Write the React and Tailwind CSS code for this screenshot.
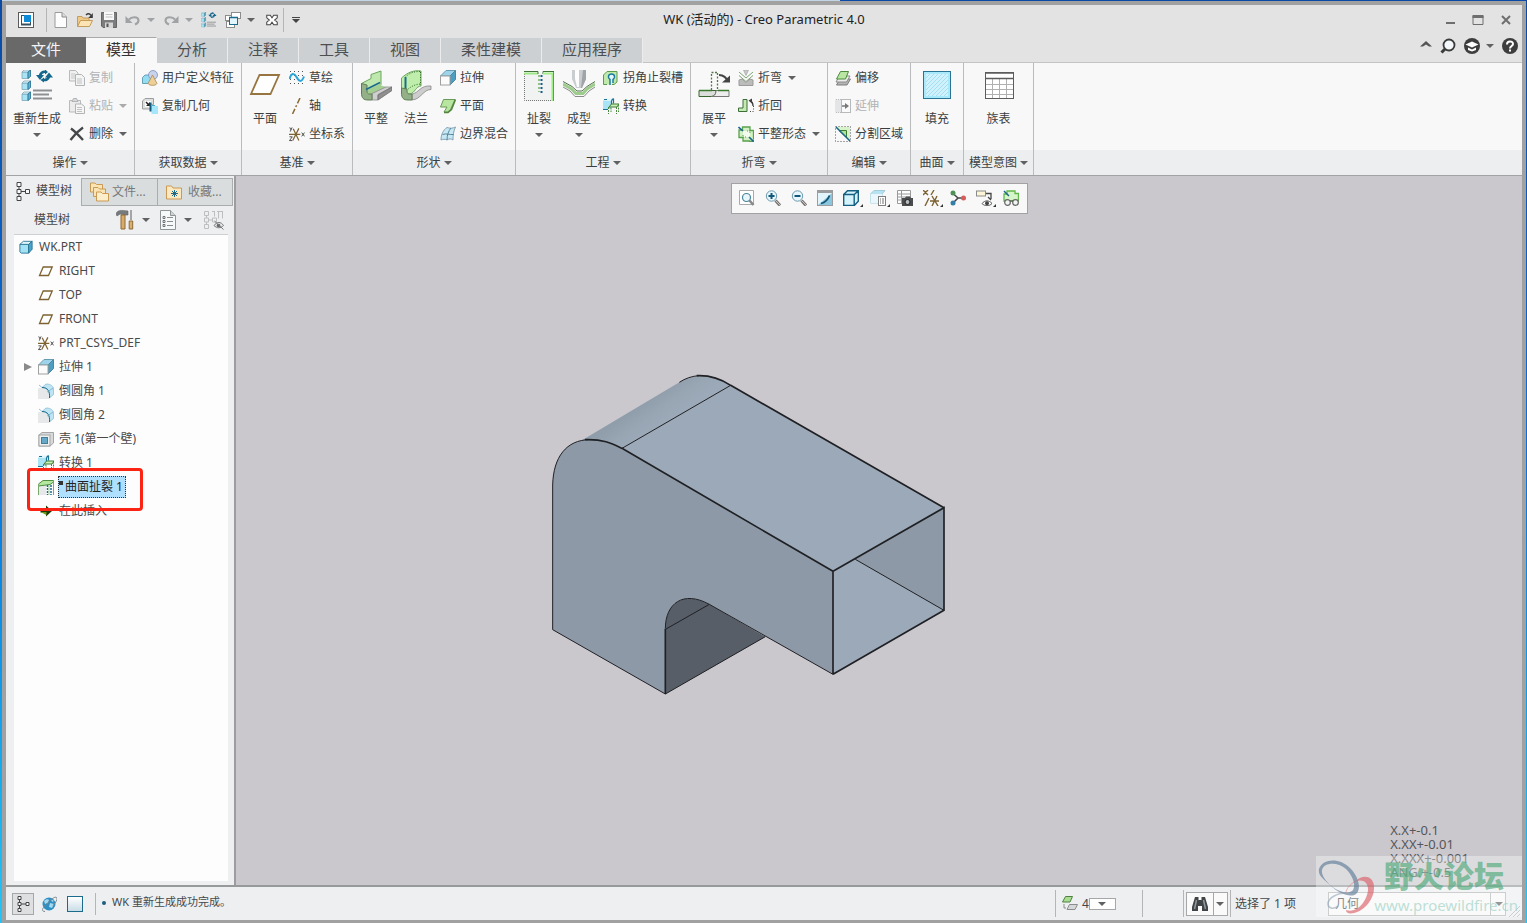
import React, { useState } from "react";

function Icon({ size = "w-4 h-4", box = "0 0 16 16", children }) {
  return (
    <svg className={`${size} shrink-0`} viewBox={box} fill="none" aria-hidden="true">
      {children}
    </svg>
  );
}

function Caret({ className = "text-[#5f6162]" }) {
  return (
    <svg className={`w-2 h-1 shrink-0 ${className}`} viewBox="0 0 8 4" fill="currentColor" aria-hidden="true">
      <path d="M0 0h8L4 4z" />
    </svg>
  );
}

/* ---------- small icons, 16x16 ---------- */

const AppIcon = () => (
  <Icon>
    <rect x=".5" y=".5" width="15" height="15" fill="#fff" stroke="#5b5b5b" />
    <rect x="3.5" y="3.5" width="9" height="9" fill="#fff" stroke="#35505f" />
    <rect x="6" y="3" width="7" height="7" fill="#0e8ad6" />
    <path d="M3 12.5h10" stroke="#35505f" strokeWidth="2" />
  </Icon>
);

const NewIcon = () => (
  <Icon>
    <path d="M2 .5h7l4.5 4.5v10.5H2z" fill="#fdfdfd" stroke="#9a9a9a" />
    <path d="M9 .5V5h4.5" fill="#dcdcdc" stroke="#8a8a8a" />
  </Icon>
);

const OpenIcon = () => (
  <Icon>
    <path d="M.5 14.5V4.5H5l1 1.5h6v3" fill="#f1c987" stroke="#c39b5b" />
    <path d="M.5 14.5 3.5 8.500h12l-3 6z" fill="#fbe3b4" stroke="#c39b5b" />
    <path d="M9 3c2-2 4-1.500 5 .5" stroke="#3c3c3c" strokeWidth="1.5" />
    <path d="M15.800 1v5h-4.500z" fill="#3c3c3c" />
  </Icon>
);

const SaveIcon = () => (
  <Icon>
    <path d="M.5.5h15v15H2l-1.500-1.500z" fill="#7b7d7f" stroke="#636567" />
    <path d="M3 0h10v8H3z" fill="#f8f8f8" />
    <path d="M4.500 2.500h7M4.500 5h7" stroke="#c0c0c0" />
    <path d="M4 10.500h8V16H4z" fill="#d6d6d6" />
    <path d="M5.500 11.500h2V15h-2z" fill="#565656" />
  </Icon>
);

const UndoIcon = () => (
  <Icon>
    <path d="M4 7.500c2.500-3 9-3 9.500.500.200 2-1.300 3.500-3.500 4.500" stroke="#a0a3a5" strokeWidth="2" />
    <path d="M.5 4v7h7z" fill="#a0a3a5" />
  </Icon>
);

const RedoIcon = () => (
  <Icon>
    <path d="M12 7.500C9.500 4.500 3 4.500 2.500 8c-.2 2 1.300 3.500 3.500 4.500" stroke="#a0a3a5" strokeWidth="2" />
    <path d="M15.500 4v7h-7z" fill="#a0a3a5" />
  </Icon>
);

const RegenShape = () => (
  <>
    {[0, 11, 22].map((y) => (
      <g key={y}>
        <path d={`M1 ${y + 2}h6v6.500H1z`} fill="#a9e4f6" stroke="#7fa6b6" strokeWidth=".8" />
        <path d={`M1 ${y + 2}l2-2h6.500l-2.500 2z`} fill="#dff6fd" stroke="#7fa6b6" strokeWidth=".8" />
        <path d={`M7 ${y + 2}l2.500-2v6.500l-2.500 2z`} fill="#5db4d3" stroke="#1f6a8c" strokeWidth=".8" />
      </g>
    ))}
    <path d="M19 5.500c1-3 3.500-4 6-3.500M28 6.500c-1 3-3 4-6 3.500" stroke="#14678c" strokeWidth="2.500" />
    <path d="M15 5h8l-4 5zM24 7.500h8L28 2.500zM24-.5v5l3-2.500zM23 7.500v5l-3.500-2.500z" fill="#14678c" />
    <path d="M12 20.500h19M12 24.500h16M12 28.500h19" stroke="#8d9092" strokeWidth="1.800" />
  </>
);

const WindowsIcon = () => (
  <Icon>
    <rect x=".5" y="3.500" width="8" height="5" fill="#fff" stroke="#8c8c8c" />
    <rect x="6.500" y=".5" width="9" height="6" fill="#fff" stroke="#8c8c8c" />
    <rect x="1.500" y="9.500" width="8" height="6" fill="#fff" stroke="#8c8c8c" />
    <rect x="4.500" y="5.500" width="8" height="7" fill="#e3f5fc" stroke="#1c6a8c" />
    <path d="M4 5.500h9" stroke="#1c6a8c" strokeWidth="1.500" />
  </Icon>
);

const CloseWindowIcon = () => (
  <Icon size="w-3.5 h-3.5">
    <path d="M2 2.500h4l2 3 2-3h4v3L11 8l3 2.500v3h-4l-2-3-2 3H2v-3L5 8 2 5.500z" fill="#fff" stroke="#464646" strokeWidth="1.200" />
  </Icon>
);

const CopyIcon = () => (
  <Icon>
    <path d="M.5.5h6L9 3v8H.5z" fill="#f0f0f0" stroke="#b7b9ba" />
    <path d="M2 4h4M2 6h4M2 8h4" stroke="#c6c8c9" />
    <path d="M6.500 4.500h6L15.500 7.500v8h-9z" fill="#f4f4f4" stroke="#b1b3b4" />
    <path d="M8 9h5M8 11h5M8 13h5" stroke="#bfc1c2" />
  </Icon>
);

const PasteIcon = () => (
  <Icon>
    <path d="M.5 2.500h11V14H.5z" fill="#ececec" stroke="#b7b9ba" />
    <path d="M3 3.500 4.500.5h3L9 3.500z" fill="#d7d9da" stroke="#b1b3b4" />
    <path d="M6.500 6h6L15.500 8.500v7h-9z" fill="#f6f6f6" stroke="#b1b3b4" />
    <path d="M8 9.500h5M8 11.500h5M8 13.500h5" stroke="#bfc1c2" />
  </Icon>
);

const DeleteIcon = () => (
  <Icon>
    <path d="M2 2.500c4 3 7 6 12 11.500M14 1.500C9 5 5 9 1.500 14" stroke="#454748" strokeWidth="2.300" />
  </Icon>
);

const UdfIcon = () => (
  <Icon>
    <path d="M.5 7.500l2.500-2.500h6v6L7 13.500H.5z" fill="#94dcf2" stroke="#4e8ea8" strokeWidth=".8" />
    <circle cx="11" cy="5" r="4.500" fill="#c8d2ec" stroke="#7e8fbb" strokeWidth=".8" />
    <path d="M10.500 5 15 13.500c-1.500 2.500-7.500 2.500-9 0z" fill="#edcf97" stroke="#a88955" strokeWidth=".8" />
  </Icon>
);

const CopyGeomIcon = () => (
  <Icon>
    <path d="M.5 3 3 .5h8.500v6L9 7v4H.5z" fill="#dedfdf" stroke="#9b9d9e" />
    <rect x="3" y="3" width="6" height="6" fill="#fff" />
    <path d="M4 4l3 3" stroke="#222" strokeWidth="1.500" />
    <path d="M8 4v4H4z" fill="#222" />
    <path d="M9.500 8H16v8H9.500z" fill="#a5e6fa" />
    <path d="M8.500 4.500v9" stroke="#14587c" strokeWidth="2" />
    <path d="M9 7.500h4" stroke="#4fb0d2" />
  </Icon>
);

const PlaneIcon = () => (
  <Icon>
    <path d="M5.200 4h9L10.500 12.500H1.500z" fill="#fff" stroke="#7d6232" strokeWidth="1.300" />
  </Icon>
);

const SketchIcon = () => (
  <Icon>
    <path d="M1 1.500h14M1 5.500h14M1 9.500h14M1 13.500h14" stroke="#555" strokeDasharray="1 3" />
    <path d="M.5 9C2 3 5 2.500 7.500 7s5 6 7.500-.5" stroke="#29a5d8" strokeWidth="2" />
  </Icon>
);

const AxisIcon = () => (
  <Icon>
    <path d="M11 0 3.500 16" stroke="#8a6a35" strokeWidth="1.500" strokeDasharray="6 2 2 2" />
  </Icon>
);

const CsysIcon = () => (
  <Icon box="0 0 17 16">
    <path d="M0 8.500h12M4.500 2.500l6 12.500M10.500 2 4 15" stroke="#7d6232" strokeWidth="1.300" />
    <path d="M.8 1l1.200 2.500M3.300 1 1.300 5.500M.5 11h3l-3 4h3M13.500 6.500l3 4M16.500 6.500l-3 4" stroke="#333" strokeWidth=".9" />
  </Icon>
);

const ExtrudeIcon = () => (
  <Icon>
    <path d="M.5 6 6 .5h9.500L10 6z" fill="#9fd3e9" stroke="#669db5" />
    <path d="M10 6l5.500-5.500v9L10 15z" fill="#4e9ec2" stroke="#4e87a0" />
    <rect x=".5" y="6" width="9.500" height="9" fill="#fbfbfb" stroke="#a0a0a0" />
  </Icon>
);

const FlatWallIcon = () => (
  <Icon>
    <path d="M3.500 1.500h11.500l-4.500 10-3 2.500H4l3-5H.5z" fill="#b8e6a0" stroke="#6a9a58" />
    <path d="M15.500 1.500l-4 10-3.500 3H4" stroke="#54823f" strokeWidth="1.500" />
  </Icon>
);

const BoundaryIcon = () => (
  <Icon>
    <path d="M1 14C1 9 3 4 7 1.500c3 1 5.500 1 8.500-.5C13.500 5 13 9 13 14c-2-1.500-4-1.500-6 0-2-1-4-1-6 0z" fill="#c6e9f5" stroke="#7b9bab" strokeWidth=".9" />
    <path d="M2.500 8.500c4-1.500 7 .5 11 0M7 14c0-5 1.500-9 4-12" stroke="#4c7a8f" strokeWidth=".9" />
  </Icon>
);

const ReliefIcon = () => (
  <Icon>
    <path d="M4 14.500H.5V5L4 1.500h10V12l-3 2.500H9" fill="#bfeaab" stroke="#5c9a4c" />
    <path d="M7 15V9.500C4.500 8 5 4 8.500 4s4 4 1.500 5.500V13" fill="#e6f7fc" stroke="#1b7ba0" strokeWidth="1.500" />
  </Icon>
);

const ConvertIcon = () => (
  <Icon>
    <path d="M0 2.500h8V11H0z" fill="#a9e3f6" />
    <path d="M0 2 3 .5h7.500L8 3z" fill="#dff5fc" />
    <path d="M1 1.500h3M8.500 2.500v5M10.500.5v5M8.500 2.500l2-2M0 11.500h5" stroke="#1b7396" strokeWidth="1.200" />
    <path d="M6 9l2.500-3H16l-2 3z" fill="#c9f0b6" stroke="#3f7a33" />
    <path d="M5.500 9v7M8 9.500V14M13.500 9v7M15.500 6.500V14" stroke="#4c8940" strokeDasharray="2 1" />
  </Icon>
);

const BendIcon = () => (
  <Icon>
    <path d="M5.500 0h5L8 5.500z" fill="#c6c9cb" stroke="#9a9a9a" strokeWidth=".6" />
    <path d="M1 2l7 6 7-6M1 5.500l7 6 7-6" stroke="#7fa575" />
    <path d="M1 10l3-1 4 3.500L12 9l3 1v5.500H1z" fill="#bcbcbc" stroke="#9b9b9b" />
  </Icon>
);

const BendBackIcon = () => (
  <Icon>
    <path d="M.5 10h4.500V1.500h4v12H.5z" fill="#c6eab6" stroke="#3c6e37" />
    <path d="M15.500 13.500H11M15.500 8v5" stroke="#4a4a4a" strokeDasharray="1 1.500" />
    <path d="M15 8c0-3-1-4.500-3-5" stroke="#3c3c3c" strokeWidth="1.300" />
    <path d="M10.500 2.500 14 .5v5z" fill="#3c3c3c" />
  </Icon>
);

const FlatPatternIcon = () => (
  <Icon>
    <path d="M4.500 1H12v3.500h3.500V12H16v3.500h-4.500V15H5v-3.500H1V4h3.500z" fill="#d2f0c4" stroke="#5aa04d" strokeWidth="1.300" />
    <rect x="5" y="5" width="7" height="6" fill="#f3fbef" />
    <path d="M.5 1l4.500 4M11 11l4.500 4.500" stroke="#1b678a" strokeWidth="1.600" />
    <path d="M5 9v2h3M9 5h3v3" stroke="#5aa04d" strokeDasharray="1 1" />
  </Icon>
);

const OffsetIcon = () => (
  <Icon>
    <path d="M1.500 15 5 9h10.500l-3.500 6z" fill="#b4b4b4" stroke="#7d7d7d" />
    <path d="M1 12 4.500 6h10.500L11.500 12z" fill="#ececec" stroke="#8b8b8b" />
    <path d="M1.500 9 5.500 1.500h8L10.500 9z" fill="#b9e7a3" stroke="#4d8a3e" />
  </Icon>
);

const ExtendIcon = () => (
  <Icon>
    <path d="M0 1.500h6v13H0z" fill="#e4e5e6" />
    <rect x="6.500" y="1.500" width="9" height="13" fill="#fafafa" stroke="#b7b9ba" />
    <path d="M1 1.500h5M1 14.500h5" stroke="#bbb" strokeDasharray="1 1" />
    <path d="M7 8h4" stroke="#777" strokeWidth="1.500" />
    <path d="M10 5l4 3-4 3z" fill="#777" />
  </Icon>
);

const SplitIcon = () => (
  <Icon>
    <path d="M1 1h14v14z" fill="#d6f3ca" />
    <rect x=".5" y=".5" width="15" height="15" stroke="#555" strokeDasharray="1 2" />
    <path d="M4 4.500h7.500v7z" fill="#aee398" stroke="#3b7d31" />
    <path d="M1 1l14 14" stroke="#1b678a" strokeWidth="1.500" />
  </Icon>
);

/* ---------- large ribbon icons, 32x32 ---------- */

const Big = ({ children }) => <Icon size="w-8 h-8" box="0 0 32 32">{children}</Icon>;

const BigPlane = () => (
  <Big>
    <path d="M10.500 5h19.500l-8.500 19H2z" fill="#fefefe" stroke="#977540" strokeWidth="1.800" />
  </Big>
);

const BigFlat = () => (
  <Big>
    <path d="M1.500 13.500 11 8.500V4.500L21 1v14L8 21.500z" fill="#bfe8ae" stroke="#6aa65b" />
    <path d="M7 20 21 13.500v2l6 1.500-14 7H10c-2 0-3-1-3-4z" fill="#a3cf92" />
    <path d="M12 23.500 26 17h6l-14 7.500v5.500h-6z" fill="#cfcfcf" stroke="#8c8c8c" strokeWidth=".8" />
    <path d="M18 25 32 17v3.500L18 30z" fill="#8f8f8f" stroke="#6e6e6e" strokeWidth=".8" />
    <path d="M1.500 13.500V23c0 5 2 7 6.500 7h4v-6h-2.500C8 24 7 23 7 21v-6z" fill="#94b088" stroke="#5e7f55" />
    <path d="M6 19.500 20 12.500" stroke="#1c6a8c" strokeWidth="1.600" />
  </Big>
);

const BigFlange = () => (
  <Big>
    <path d="M12 24c7-1 8-9 19-8v3.500c-8 0-10 10-19 10.500z" fill="#cdcdcd" stroke="#868686" strokeWidth=".8" />
    <path d="M1.500 8C8 2 14 0 21 1v15c-5 0-6 7-11 8-4 0-8-1-8.500-5z" fill="#bfeeac" stroke="#6aa65b" />
    <path d="M5.500 7C10 2.500 14 1.500 21 1.500M6 21c4-4 9-7 15-7" stroke="#2f6a2b" strokeDasharray="1 1.500" />
    <path d="M20.500 2v13" stroke="#2f6a2b" strokeDasharray="1 1.500" />
    <path d="M5.500 7v12" stroke="#1c6a8c" strokeWidth="2" />
    <path d="M1.500 18V23c0 5 2 7 6.500 7h4v-6h-2.500C8 24 7 23 7 21v-2z" fill="#94b088" stroke="#5e7f55" />
  </Big>
);

const BigRip = () => (
  <Big>
    <path d="M1 3h30v28H1z" fill="#f1f2f2" />
    <path d="M1.500 4v26.500H30" stroke="#777" strokeDasharray="1 1" />
    <path d="M1 3.500h14" stroke="#9be884" strokeWidth="2" />
    <path d="M1 1.500h14V4M31 1.500H20V4" stroke="#3f7238" />
    <path d="M20 3.500h9.500V31" stroke="#a0ee88" strokeWidth="2" />
    <path d="M30.500 2v29" stroke="#5ba04c" />
    <path d="M16 5v17" stroke="#8fc283" strokeWidth="2" strokeDasharray="2 2" />
    <path d="M18.500 5v18" stroke="#175c81" strokeWidth="2" strokeDasharray="2 2" />
  </Big>
);

const BigForm = () => (
  <Big>
    <path d="M9 0h14v9l-4 9h-6L9 9z" fill="#c9cdd0" />
    <path d="M12 0h4v17h-2l-2-8z" fill="#fdfdfd" />
    <path d="M20 0h3v9l-4 9h-1z" fill="#9fa4a8" />
    <path d="M0 11.500l9 5 5 4.500h5l5-4.500 8-5" stroke="#55704d" />
    <path d="M0 14l8.500 5L13 23.500h7L24 19l8-5" stroke="#9dcc8d" strokeWidth="3" />
    <path d="M0 17l7 4 5 5.500h9l5-5.500 6-4" stroke="#8a8a8a" />
  </Big>
);

const BigUnbend = () => (
  <Big>
    <path d="M1 20.500h17c0 4-2 6-5 6H1z" fill="#dcdedb" stroke="#3a6533" />
    <path d="M18 20.500h13v6H13c3 0 5-2 5-6z" fill="#ededed" stroke="#777" />
    <path d="M1 20.500h13M20 20.500h11" stroke="#3a7a2e" strokeWidth="1.500" />
    <path d="M13.500 20V2.500h6M19.500 3v17" stroke="#537649" strokeWidth="1.300" strokeDasharray="2 1.500" />
    <path d="M21 5c5 0 7 3 9 6" stroke="#444" strokeWidth="2" />
    <path d="M24 12.500h8V5.500z" fill="#444" />
  </Big>
);

const BigFill = () => (
  <Big>
    <rect x="2.500" y="1.500" width="27" height="27" fill="#a8e9fb" stroke="#2b7392" />
    <rect x="5" y="4" width="22" height="22" fill="#d0f2fc" />
    <path d="M5 8l4-4M5 12l8-8M5 16 17 4M5 20 21 4M5 24 25 4M7 26 27 6M11 26l16-16M15 26l12-12M19 26l8-8M23 26l4-4" stroke="#a4def0" />
  </Big>
);

const BigTable = () => (
  <Big>
    <rect x="2.500" y="2.500" width="28" height="26" fill="#fff" stroke="#5c5c5c" />
    <path d="M3 14.500h27M3 19.500h27M3 24.500h27M9.500 8v20M16.500 8v20M23.500 8v20" stroke="#b0b0b0" />
    <path d="M2 3h29M3 8.500h27" stroke="#5c5c5c" strokeWidth="1.500" />
  </Big>
);

const BigRegen = () => <Big><RegenShape /></Big>;
const SmallRegen = () => <Icon box="0 0 33 32"><RegenShape /></Icon>;

/* ---------- model tree icons ---------- */

const PartIcon = () => (
  <Icon size="w-3.5 h-3.5">
    <path d="M1 5h10v10H2.500L1 13.500z" fill="#a3e2f5" stroke="#267191" />
    <path d="M1 5l4-3.500h10L11 5z" fill="#dff6fd" stroke="#267191" />
    <path d="M11 5l4-3.500v9L11 15z" fill="#4aa7cb" stroke="#267191" />
  </Icon>
);

const RoundIcon = () => (
  <Icon>
    <path d="M0 5h5c5 1 6 4 6 11H0z" fill="#e7e8e9" />
    <path d="M4 4.500 8 1c5 0 7.500 2 7.500 6v4.500L11.500 15c.5-6-1.500-10-7.500-10.500z" fill="#bfe4f3" stroke="#8fc0d4" strokeWidth=".8" />
    <path d="M4 4.500c6 0 8 4 7.500 10.500" stroke="#1c6a8c" />
    <path d="M1 2l3 2.500M9 9l6.500-4" stroke="#6fb3cd" strokeWidth=".8" />
  </Icon>
);

const ShellIcon = () => (
  <Icon>
    <path d="M1 4l3-2.500h11.500V12L12 15H1z" fill="#d7d9da" stroke="#a3a5a6" />
    <rect x="1" y="4" width="11" height="11" fill="#eeefef" stroke="#a3a5a6" />
    <rect x="3.500" y="6.500" width="6" height="6" fill="#65a9c8" stroke="#467e98" />
  </Icon>
);

const RipTreeIcon = () => (
  <Icon>
    <path d="M1 6h7v10H1z" fill="#e7e8e9" />
    <path d="M.5 7V5L5 1.500h10.500V3L12 5.500z" fill="#b3e89e" stroke="#4e8d42" />
    <path d="M.5 5v11M15.500 2v14" stroke="#7aa970" />
    <path d="M9.500 6v10M13 6v10" stroke="#1c6a8c" strokeWidth="1.500" strokeDasharray="2 1" />
    <path d="M11 6v10" stroke="#9ccf8c" />
  </Icon>
);

const InsertIcon = () => (
  <Icon>
    <path d="M2.500 6.500H8V2.500l6 5.500-6 5.500V9.500H2.500z" fill="#1d3a0c" />
    <path d="M2.500 9h6v3z" fill="#6a9c1e" />
  </Icon>
);

const TreeIcon = () => (
  <Icon size="w-3.5 h-[19px]" box="0 0 14 19">
    <path d="M3 5v9M5 9.500h4.500" stroke="#444" />
    <path d="M1 .5h4v4H1zM1 7.500h4v4H1zM1 14.500h4v4H1zM9.500 7.500h4v4h-4z" fill="#fafafa" stroke="#444" />
  </Icon>
);

const FoldersIcon = () => (
  <Icon size="w-5 h-5" box="0 0 20 20">
    <path d="M.5 1h4.500l1.500 1.500h6V10H.5z" fill="#fbe4b3" stroke="#c99a55" />
    <path d="M3.500 5.500H8L9.500 7h6v7.500h-12z" fill="#fbe4b3" stroke="#c99a55" />
    <path d="M6.500 10H11l1.500 1.500h6V19h-12z" fill="#fdeecb" stroke="#c99a55" />
  </Icon>
);

const FavoritesIcon = () => (
  <Icon>
    <path d="M.5 2h5l1.500 2h8.500v11H.5z" fill="#fbe8bf" stroke="#c99a55" />
    <path d="M8.500 6v7M5 9.500h7M6 7l5 5M11 7l-5 5" stroke="#1c6a8c" />
  </Icon>
);

const ToolsIcon = () => (
  <Icon size="w-[18px] h-[22px]" box="0 0 18 22">
    <path d="M0 5C1 1 5 1 12 2v4H8L4 5 1 7z" fill="#777b7e" stroke="#5e6163" strokeWidth=".6" />
    <path d="M5 6h4v14H5z" fill="#d8ab6a" stroke="#8e6a35" />
    <path d="M15 1v10" stroke="#8a8d8f" strokeWidth="1.500" />
    <path d="M13.200 12h3.500v8h-3.500z" fill="#d9b071" stroke="#8e6a35" />
  </Icon>
);

const SettingsIcon = () => (
  <Icon size="w-4 h-5" box="0 0 16 20">
    <path d="M.5.5h10l5 5v14H.5z" fill="#f6f9fa" stroke="#8f9496" />
    <path d="M10.500.5v5h5" fill="#d1d4d6" stroke="#8f9496" />
    <path d="M7 7.500h6M7 11.500h6M7 15.500h6" stroke="#8b8b8b" />
    <path d="M3 6.500h2v2H3zM3 10.500h2v2H3zM3 14.500h2v2H3z" stroke="#555" strokeWidth=".8" />
  </Icon>
);

const HiddenTreeIcon = () => (
  <Icon size="w-5 h-5" box="0 0 20 20">
    <path d="M.5 1.500h4v4h-4zM.5 8h4v4h-4zM.5 14.500h4v4h-4zM2.500 5.500V8M2.500 12v2.500M4.500 10H8M8.500 8h4v4h-4zM8 1.500h3M13 1.500h6M10.500 1.500v5M14.500 1.500v7M18.500 1.500v7" stroke="#bcbec0" />
    <path d="M10 15.500c3-4 7-4 9.500 0-3 3-6.500 3-9.500 0z" fill="#e5e6e7" stroke="#777" />
    <circle cx="14.500" cy="15.500" r="1.800" fill="#666" />
    <path d="M10.500 11l9 8.500" stroke="#777" />
  </Icon>
);

/* ---------- graphics toolbar icons ---------- */

const Lens = ({ sign }) => (
  <>
    <path d="M10.500 10.500 15 15.500" stroke="#777" strokeWidth="3" />
    <path d="M10.500 10.500 15 15" stroke="#d2c4bd" />
    <circle cx="6.500" cy="6" r="5.200" fill="#e6f6fc" stroke="#6f9bad" />
    <path d={sign} stroke="#14577a" strokeWidth="2" />
  </>
);

const ViewIcons = {
  "重新调整": (
    <Icon>
      <path d="M.5.5h14v14H.5z" fill="#fff" stroke="#a7a9aa" />
      <path d="M10.500 10.500l4 4.500" stroke="#888" strokeWidth="2.500" />
      <circle cx="7.500" cy="7.500" r="4" fill="#e6f6fc" stroke="#4a839b" strokeWidth="1.200" />
    </Icon>
  ),
  "放大": <Icon><Lens sign="M3.500 6h6M6.500 3v6" /></Icon>,
  "缩小": <Icon><Lens sign="M3.500 6h6" /></Icon>,
  "重画": (
    <Icon>
      <rect x=".5" y=".5" width="15" height="15" fill="#e3f5fc" stroke="#9a9c9d" />
      <path d="M1 15 15 3v12z" fill="#8ac7de" />
      <path d="M0 1.500h16" stroke="#9a9c9d" strokeWidth="3" />
      <path d="M4 13.500c4-1 7-4 8.500-8" stroke="#145272" strokeWidth="1.800" />
    </Icon>
  ),
  "显示样式": (
    <Icon>
      <path d="M.7 4.500h10.500v11H.7zM.7 4.500 4.500.7h10.800v10.500l-4 4.300M11.300 4.500l4-3.800" fill="#d5f3fc" stroke="#145f82" strokeWidth="1.400" />
    </Icon>
  ),
  "已保存方向": (
    <Icon>
      <path d="M.5 4 4 .5h11L12 4v9H.5z" fill="#b6e2f2" stroke="#a0cbdc" />
      <path d="M.5 4H12v9H.5z" fill="#e9f6fb" />
      <rect x="8.500" y="6.500" width="7" height="9" fill="#fff" stroke="#7d7d7d" />
      <path d="M10 9h1M10 11h1M10 13h1M12 9h2M12 11h2M12 13h2" stroke="#444" strokeWidth=".8" />
    </Icon>
  ),
  "视图管理器": (
    <Icon>
      <path d="M.5.5h13v13H.5zM.5 4h13M.5 7h13M.5 10h13M4.500.5v13" fill="#fff" stroke="#999" />
      <path d="M5 8h3l1-1.500h4l1 1.500h2v8H5z" fill="#4a4c4e" />
      <circle cx="10.500" cy="12" r="2.500" fill="#b8bbbd" stroke="#222" />
    </Icon>
  ),
  "基准显示过滤器": (
    <Icon>
      <path d="M0 0l5 5M5 0 0 5M11 0 8 5M6 8l-4 8M7 11h9M9 16l5-10M9 6l6 10" stroke="#7d6232" strokeWidth="1.400" />
    </Icon>
  ),
  "旋转中心": (
    <Icon>
      <path d="M3 3.500 8 8l-5 5M8 8h5" stroke="#444" strokeWidth="1.500" />
      <circle cx="3" cy="3" r="2.500" fill="#4f9157" />
      <circle cx="3" cy="13" r="2.500" fill="#327ea4" />
      <circle cx="13.500" cy="8" r="2.500" fill="#d55d5d" />
    </Icon>
  ),
  "注释显示": (
    <Icon>
      <rect x=".5" y="1" width="9" height="5" fill="#fdf5d5" stroke="#8a8a8a" />
      <path d="M10 3.500h5V9M12 7l3 3" stroke="#444" strokeWidth="1.300" />
      <path d="M6 13.500c3-3.500 7-3.500 10 0-3 3-7 3-10 0z" fill="#fff" stroke="#555" />
      <circle cx="11" cy="13.300" r="2" fill="#444" />
    </Icon>
  ),
  "平整预览": (
    <Icon>
      <path d="M4 1h8v2.500h3.500V11H1V4h3z" fill="#d6f5c9" stroke="#5fb84b" strokeWidth="1.300" />
      <path d="M1 1l5 5" stroke="#1b678a" strokeWidth="1.500" />
      <circle cx="4.500" cy="12.500" r="2.800" fill="#f4f4f4" stroke="#666" strokeWidth="1.200" />
      <circle cx="12.500" cy="12.500" r="2.800" fill="#f4f4f4" stroke="#666" strokeWidth="1.200" />
      <path d="M7 11h3" stroke="#555" />
    </Icon>
  ),
};

const viewTools = [
  { name: "重新调整" },
  { name: "放大" },
  { name: "缩小" },
  { name: "重画" },
  { name: "显示样式", menu: true },
  { name: "已保存方向", menu: true },
  { name: "视图管理器" },
  { name: "基准显示过滤器", menu: true },
  { name: "旋转中心" },
  { name: "注释显示", menu: true },
  { name: "平整预览" },
];

const tabs = ["模型", "分析", "注释", "工具", "视图", "柔性建模", "应用程序"];

const groups = [
  {
    name: "操作",
    big: [{ label: "重新生成", icon: BigRegen, menu: true, wide: true }],
    small: [
      { label: "复制", icon: CopyIcon, disabled: true },
      { label: "粘贴", icon: PasteIcon, disabled: true, menu: true },
      { label: "删除", icon: DeleteIcon, menu: true },
    ],
  },
  {
    name: "获取数据",
    small: [
      { label: "用户定义特征", icon: UdfIcon },
      { label: "复制几何", icon: CopyGeomIcon },
    ],
  },
  {
    name: "基准",
    big: [{ label: "平面", icon: BigPlane }],
    small: [
      { label: "草绘", icon: SketchIcon },
      { label: "轴", icon: AxisIcon },
      { label: "坐标系", icon: CsysIcon },
    ],
  },
  {
    name: "形状",
    big: [
      { label: "平整", icon: BigFlat },
      { label: "法兰", icon: BigFlange },
    ],
    small: [
      { label: "拉伸", icon: ExtrudeIcon },
      { label: "平面", icon: FlatWallIcon },
      { label: "边界混合", icon: BoundaryIcon },
    ],
  },
  {
    name: "工程",
    big: [
      { label: "扯裂", icon: BigRip, menu: true },
      { label: "成型", icon: BigForm, menu: true },
    ],
    small: [
      { label: "拐角止裂槽", icon: ReliefIcon },
      { label: "转换", icon: ConvertIcon },
    ],
  },
  {
    name: "折弯",
    big: [{ label: "展平", icon: BigUnbend, menu: true }],
    small: [
      { label: "折弯", icon: BendIcon, menu: true },
      { label: "折回", icon: BendBackIcon },
      { label: "平整形态", icon: FlatPatternIcon, menu: true },
    ],
  },
  {
    name: "编辑",
    small: [
      { label: "偏移", icon: OffsetIcon },
      { label: "延伸", icon: ExtendIcon, disabled: true },
      { label: "分割区域", icon: SplitIcon },
    ],
  },
  { name: "曲面", big: [{ label: "填充", icon: BigFill }] },
  { name: "模型意图", big: [{ label: "族表", icon: BigTable }] },
];

const features = [
  { label: "RIGHT", icon: PlaneIcon },
  { label: "TOP", icon: PlaneIcon },
  { label: "FRONT", icon: PlaneIcon },
  { label: "PRT_CSYS_DEF", icon: CsysIcon },
  { label: "拉伸 1", icon: ExtrudeIcon, expandable: true },
  { label: "倒圆角 1", icon: RoundIcon },
  { label: "倒圆角 2", icon: RoundIcon },
  { label: "壳 1(第一个壁)", icon: ShellIcon },
  { label: "转换 1", icon: ConvertIcon },
  { label: "曲面扯裂 1", icon: RipTreeIcon, selected: true },
  { label: "在此插入", icon: InsertIcon },
];

function TitleBar() {
  return (
    <header className="grid grid-cols-[1fr_auto_1fr] items-center h-8 pb-[3px] shrink-0">
      <div className="flex items-center pl-3">
        <button aria-label="Creo"><AppIcon /></button>
        <span className="w-px h-6 bg-[#b5b5b5] ml-3 mr-1.5" />
        <div className="flex items-center gap-2">
          <button aria-label="新建"><NewIcon /></button>
          <button aria-label="打开"><OpenIcon /></button>
          <button aria-label="保存"><SaveIcon /></button>
          <button aria-label="撤消" className="flex items-center gap-1.5">
            <UndoIcon />
            <Caret className="text-[#a0a3a5]" />
          </button>
          <button aria-label="重做" className="flex items-center gap-1.5">
            <RedoIcon />
            <Caret className="text-[#a0a3a5]" />
          </button>
          <button aria-label="重新生成"><SmallRegen /></button>
          <button aria-label="窗口" className="flex items-center gap-1.5">
            <WindowsIcon />
            <Caret />
          </button>
          <button aria-label="关闭" className="ml-0.5"><CloseWindowIcon /></button>
        </div>
        <span className="w-px h-6 bg-[#b5b5b5] ml-1 mr-2" />
        <button aria-label="自定义快速访问工具栏" className="flex flex-col items-center gap-px text-[#444]">
          <span className="w-2 h-px bg-current" />
          <Caret className="text-[#444]" />
        </button>
      </div>
      <h1 className="text-[13px] text-[#222]">WK (活动的) - Creo Parametric 4.0</h1>
      <div className="flex items-center justify-end gap-4 pr-2.5 text-[#6e6e6e]">
        <button aria-label="最小化">
          <Icon size="w-3 h-3" box="0 0 12 12"><path d="M2 9h9" stroke="currentColor" strokeWidth="2" /></Icon>
        </button>
        <button aria-label="最大化">
          <Icon size="w-3 h-3" box="0 0 12 12"><path d="M1 2h10v8.500H1z" stroke="currentColor" /><path d="M.5 1h11v3H.5z" fill="currentColor" /></Icon>
        </button>
        <button aria-label="关闭窗口">
          <Icon size="w-3 h-3" box="0 0 12 12"><path d="M2 2l8 8M10 2l-8 8" stroke="currentColor" strokeWidth="2" /></Icon>
        </button>
      </div>
    </header>
  );
}

function TabBar({ active, onChange }) {
  return (
    <nav className="flex h-[26px] shrink-0 text-[15px] text-[#4c4f51]">
      <button className="w-20 pb-0.5 bg-[#696969] text-[#f4f4f4]">文件</button>
      {tabs.map((tab) => (
        <button
          key={tab}
          onClick={() => onChange(tab)}
          className={
            tab === active
              ? "px-5 pb-0.5 border-r border-t border-[#f8f8f8] border-t-[#a8a8a8] bg-[#f8f8f8] text-[#333]"
              : "px-5 mt-px pb-0.5 border-r border-[#ececec] bg-[#ccd0d3]"
          }
        >
          {tab}
        </button>
      ))}
      <div className="flex-1 flex items-center justify-end gap-2 pr-1 pb-2 border-b border-[#c4c4c4]">
        <button aria-label="最小化功能区">
          <Icon size="w-3 h-4" box="0 0 12 16"><path d="M0 8.500 6 3l6 5.500H9L6 6.500 3 8.500z" fill="#555" /></Icon>
        </button>
        <button aria-label="搜索">
          <Icon>
            <circle cx="9" cy="7" r="5.500" fill="#f4f8fb" stroke="#3a3a3a" strokeWidth="1.800" />
            <path d="M5 11 1.500 14.500" stroke="#3a3a3a" strokeWidth="3" />
          </Icon>
        </button>
        <button aria-label="学习" className="flex items-center gap-1.5">
          <Icon>
            <circle cx="8" cy="8" r="8" fill="#3d3d3d" />
            <path d="M1.500 6.500 8 3.500l6.500 3L8 9.500z" fill="#fff" />
            <path d="M4 9.500l4 2 4-2V12l-4 1.500L4 12z" fill="#fff" />
          </Icon>
          <Caret />
        </button>
        <button aria-label="帮助">
          <Icon>
            <circle cx="8" cy="8" r="8" fill="#3d3d3d" />
            <path d="M5 6.500C5 2.500 11 2.500 11 6c0 2-3 2-3 4.500" stroke="#fff" strokeWidth="2" />
            <path d="M7 11.500h2v2H7z" fill="#fff" />
          </Icon>
        </button>
      </div>
    </nav>
  );
}

function BigButton({ item }) {
  const Glyph = item.icon;
  return (
    <button className={`flex flex-col items-center pt-1.5 ${item.wide ? "w-14" : "w-10"}`}>
      <Glyph />
      <span className="mt-2 leading-[18px] whitespace-nowrap">{item.label}</span>
      {item.menu && <span className="mt-[5px]"><Caret /></span>}
    </button>
  );
}

function SmallButton({ item }) {
  const Glyph = item.icon;
  return (
    <button
      disabled={item.disabled}
      className={`flex items-center gap-1 h-7 whitespace-nowrap ${item.disabled ? "text-[#b1b3b4]" : ""}`}
    >
      <Glyph />
      <span>{item.label}</span>
      {item.menu && <span className="flex ml-0.5"><Caret className={item.disabled ? "text-[#a8aaab]" : "text-[#5f6162]"} /></span>}
    </button>
  );
}

function Ribbon() {
  return (
    <div className="flex shrink-0 h-[113px] bg-[#f8f8f8] border-b border-[#a3a3a3] text-xs text-[#3b3e40]">
      {groups.map((group) => (
        <section key={group.name} className="flex flex-col border-r border-[#b9bbbc]">
          <div className={`flex items-start flex-1 pt-px ${group.small ? "pl-[3px] pr-[7px]" : "justify-center px-1.5"}`}>
            {group.big?.map((item) => <BigButton key={item.label} item={item} />)}
            {group.small && (
              <div className="flex flex-col items-start ml-1">
                {group.small.map((item) => <SmallButton key={item.label} item={item} />)}
              </div>
            )}
          </div>
          <button className="flex items-center justify-center gap-[3px] h-[25px] px-[5px] bg-[#edeef0] whitespace-nowrap">
            {group.name}
            <Caret />
          </button>
        </section>
      ))}
      <div className="flex-1 self-end h-[25px] bg-[#edeef0]" />
    </div>
  );
}

function ModelTree() {
  return (
    <aside className="flex flex-col w-[230px] shrink-0 bg-[#edeff1] border-r-2 border-[#9d9d9f] text-xs text-[#45484a]">
      {/* Navigator tabs */}
      <div className="flex h-[30px] pr-px shrink-0">
        <button className="flex items-center gap-1.5 w-[75px] pl-2.5 whitespace-nowrap">
          <TreeIcon />
          模型树
        </button>
        <button className="flex items-center gap-0.5 w-[77px] mt-0.5 pl-2 bg-[#dadddd] border border-[#a9adae] text-[#77797b] whitespace-nowrap">
          <FoldersIcon />
          文件...
        </button>
        <button className="flex items-center gap-1.5 flex-1 mt-0.5 pl-2 bg-[#dadddd] border border-l-0 border-[#a9adae] text-[#77797b] whitespace-nowrap">
          <FavoritesIcon />
          收藏...
        </button>
      </div>

      {/* Tree header */}
      <div className="flex items-center h-[29px] shrink-0 ml-2 mr-1.5 pl-5 border-b border-[#cdcfd0]">
        <h2>模型树</h2>
        <div className="flex items-center gap-2.5 ml-auto">
          <button aria-label="工具" className="flex items-center gap-2"><ToolsIcon /><Caret /></button>
          <button aria-label="设置" className="flex items-center gap-2"><SettingsIcon /><Caret /></button>
          <button aria-label="隐藏树" className="pl-0.5 pr-1"><HiddenTreeIcon /></button>
        </div>
      </div>

      <ul className="flex-1 ml-2 mr-1.5 mb-1 bg-[#fdfdfd] text-[#4a4a4a]">
        <li className="flex items-center gap-1.5 h-6 pl-[5px]">
          <PartIcon />
          WK.PRT
        </li>
        {features.map((item) => {
          const Glyph = item.icon;
          return (
            <li key={item.label} className="relative flex items-center gap-1 h-6 pl-2.5">
              <span className="w-3 text-[#8a8a8a]">
                {item.expandable && (
                  <svg className="w-2 h-2" viewBox="0 0 8 8" fill="currentColor" aria-hidden="true"><path d="M0 0l8 4-8 4z" /></svg>
                )}
              </span>
              <span className="flex -ml-0.5 w-[17px]"><Glyph /></span>
              {item.selected ? (
                <span className="flex items-center h-[22px] pr-0.5 -ml-px bg-[#b0e0ff] border border-dotted border-[#333] text-[#222]">
                  <span className="self-start mt-1 mr-0.5 w-1 h-1 bg-[#333]" />
                  {item.label}
                </span>
              ) : (
                <span>{item.label}</span>
              )}
              {item.selected && (
                <span className="absolute z-10 left-[13px] -top-[7px] w-[116px] h-[43px] border-3 border-[#fb2313] rounded" />
              )}
            </li>
          );
        })}
      </ul>
    </aside>
  );
}

function PartModel() {
  return (
    <svg className="absolute left-[304px] top-[184px] w-[420px] h-[350px]" viewBox="0 0 1260 1050" fill="none" role="img" aria-label="WK">
      <defs>
        <linearGradient id="bend" gradientUnits="userSpaceOnUse" x1="290" y1="145" x2="340" y2="215">
          <stop offset="0" stopColor="#909dab" />
          <stop offset=".5" stopColor="#98a6b4" />
          <stop offset="1" stopColor="#9ca9b8" />
        </linearGradient>
      </defs>
      <path d="M122 243 418 67C470 36 525 45 572 76L246 265C200 240 165 236 122 243z" fill="url(#bend)" />
      <path d="M246 265 572 76 1212 443 879 634z" fill="#9ca9b8" />
      <path d="M376 1002V806C376 730 430 690 508 733L676 830z" fill="#585e68" />
      <path d="M38 809V375C40 290 80 240 148 239 190 239 215 250 246 265L879 634V943L508 733C430 690 376 730 376 806V1002z" fill="#8d99a6" />
      <path d="M879 634 1212 443V751L879 943z" fill="#9ca9b8" />
      <path d="M946 598 1212 443V751z" fill="#8d99a6" />
      <g stroke="#1f2024" strokeWidth="3">
        <path d="M38 375V809L376 1002 676 830M38 375C40 290 80 240 148 239M246 265 572 76M378 807 508 733M946 598 1212 751M879 943 508 733C430 690 376 730 376 806M418 67C436 55 456 48 478 47" />
        <path d="M470 47C510 45 545 58 572 76L1212 443M135 239C190 237 215 250 246 265L879 634" strokeWidth="5" />
        <path d="M376 806V1002M879 943V634L1212 443V751L879 943" strokeWidth="5" />
      </g>
    </svg>
  );
}

function Viewport() {
  return (
    <main className="relative flex-1 bg-[#cac8cd] overflow-hidden">
      <div className="flex justify-center pt-[7px]">
        <div className="flex h-[31px] pl-0.5 pr-[3px] bg-[#f8f8f8] border border-[#a2a2a2]">
          {viewTools.map((tool) => (
            <button
              key={tool.name}
              aria-label={tool.name}
              className={`relative flex items-center justify-center pb-px ${tool.menu ? "w-[27px] pr-px" : "w-[26px]"}`}
            >
              {ViewIcons[tool.name]}
              {tool.menu && (
                <svg className="absolute right-0.5 bottom-1.5 w-[3px] h-[3px]" viewBox="0 0 3 3" aria-hidden="true"><path d="M3 0v3H0z" fill="#333" /></svg>
              )}
            </button>
          ))}
        </div>
      </div>
      <PartModel />
      <div className="absolute right-[53px] bottom-[6px] text-[13px] leading-[14px] text-[#55565a]">
        <p>X.X+-0.1</p>
        <p>X.XX+-0.01</p>
        <p>X.XXX+-0.001</p>
        <p>ANG.+-0.5</p>
      </div>
    </main>
  );
}

function StatusBar() {
  return (
    <footer className="flex items-center shrink-0 h-[35px] border-t-2 border-[#969a9b] bg-[#edeff1] text-xs text-[#45484a]">
      <div className="flex items-center gap-[7px] pl-1.5">
        <button aria-label="导航器" className="flex items-center justify-center w-[22px] h-[22px] bg-[#dddfe0] border border-[#a5a7a8]">
          <Icon size="w-3.5 h-4" box="0 0 14 16">
            <path d="M3.500 4v8M5 8h5" stroke="#444" />
            <path d="M2 .5h3v3H2zM2 6.500h3v3H2zM2 12.500h3v3H2zM10 6.500h3v3h-3z" fill="#fafafa" stroke="#444" />
          </Icon>
        </button>
        <button aria-label="浏览器">
          <Icon>
            <circle cx="8" cy="8" r="6.500" fill="#2d8fc4" />
            <path d="M3 5c2-2 4-2 5-1l-1 3-3 1zM9 7l4 1-2 4-3-1zM10 3l3 2-2 1z" fill="#a6d8ee" />
            <path d="M4 15.500c-3 0-4-2 1-7C9 4 14 0 15.500 1.500S15 6 12 9.500" stroke="#7b8388" />
          </Icon>
        </button>
        <button aria-label="全屏" className="ml-[3px] w-4 h-4 border border-[#1c6a8c] bg-linear-to-b from-white to-[#c9dde6]" />
      </div>
      <span className="w-px h-[22px] ml-3 mr-1.5 bg-[#b3b5b6]" />
      <p className="flex items-center gap-1.5 pb-0.5 text-[11px]">
        <span className="w-1 h-1 rounded-full bg-[#1c5f80]" />
        WK 重新生成成功完成。
      </p>

      <div className="flex items-center ml-auto h-[27px]">
        <div className="flex items-center gap-1 w-[87px] h-full pl-1.5 border-l border-[#b3b5b6]">
          <Icon>
            <path d="M.5 6 3.500.5h7L8 6z" fill="#a8dd92" stroke="#4f8043" />
            <path d="M5 13.500l2.500-5h8L13 13.500z" fill="#d5d7d8" stroke="#8b8d8e" />
            <path d="M2 8v4h2" stroke="#8b8d8e" />
          </Icon>
          <span className="flex items-center">
            4
            <button aria-label="过滤器数量" className="flex items-center justify-center w-[27px] h-3 bg-white border border-[#a5a7a8]"><Caret /></button>
          </span>
        </div>
        <div className="w-[41px] h-full border-l border-[#b3b5b6]" />
        <div className="flex items-center w-[47px] h-full pl-0.5 border-l border-[#b3b5b6]">
          <button aria-label="查找" className="flex items-center justify-center w-7 h-6 bg-[#fafafa] border border-[#a5a7a8]">
            <Icon>
              <path d="M3 1h3.500v3h3V1H13l3 10v4h-6v-5H6v5H0v-4z" fill="#414446" />
              <path d="M4.500 4 2.500 13M11.500 4l2 9" stroke="#94989a" strokeWidth="1.500" />
            </Icon>
          </button>
          <button aria-label="查找选项" className="flex items-center justify-center w-3.5 h-6 bg-[#fafafa] border border-l-0 border-[#a5a7a8]"><Caret /></button>
        </div>
        <p className="h-full pl-1 border-l border-[#b3b5b6] leading-[27px] whitespace-nowrap">选择了 1 项</p>
        <div className="relative ml-8 w-[178px]">
          <select aria-label="选择过滤器" className="appearance-none w-full h-6 pl-1.5 bg-[#f7f8f8] border border-[#b3b5b6]">
            <option>几何</option>
          </select>
          <span className="pointer-events-none absolute right-0 inset-y-0 flex items-center justify-center w-4 border-l border-[#b3b5b6]"><Caret /></span>
        </div>
        <svg className="w-3 h-3 mx-0.5 self-end" viewBox="0 0 12 12" stroke="#b1b3b4" aria-hidden="true">
          <path d="M1 12 12 1M5 12l7-7M9 12l3-3" />
        </svg>
      </div>
    </footer>
  );
}

function Watermark() {
  return (
    <div className="pointer-events-none absolute right-0 bottom-[3px] w-[206px] h-[61px] bg-white/35">
      <svg className="absolute left-0 top-1 w-[60px] h-14" viewBox="0 0 60 56" fill="none" aria-hidden="true">
        <path fillRule="evenodd" d="M3 9C7-2 24-2 34 8c10 10 11 22 6 26-5 4-17 0-26-9C6 18 2 15 3 9zm3 1c-1 6 5 13 12 18 8 5 16 6 19 2 3-5 0-14-7-21C22 2 8 2 6 10z" fill="#5f7d97" opacity=".65" />
        <path d="M30 33c-9 0-18 5-18 11 0 4 5 6 10 2" stroke="#8fa3b5" strokeWidth="1.500" opacity=".6" />
        <path fillRule="evenodd" d="M40 21c7-7 17-5 18 5 1 13-10 25-20 27-5 1-8 0-8-3 12 4 22-11 22-21 0-7-5-10-12-8z" fill="#d9545c" opacity=".6" />
        <path d="M40 21c-6 3-10 8-10 12" stroke="#d9545c" opacity=".4" />
      </svg>
      <p className="absolute right-[18px] top-0 text-[30px] leading-10 font-black text-[#4aa877]/65 whitespace-nowrap">野火论坛</p>
      <p className="absolute right-1 bottom-0.5 text-[15px] leading-5 text-[#9fd3c6]/70 whitespace-nowrap">www.proewildfire.cn</p>
    </div>
  );
}

export default function App() {
  const [activeTab, setActiveTab] = useState("模型");

  return (
    <div className="flex flex-col h-screen pl-0.5 pr-px bg-linear-to-b from-[#0a4aa6] via-[#0a72dc] to-[#25c4f5] font-['Noto_Sans','Noto_Sans_CJK_SC',sans-serif]">
      <div className="w-[55%] h-px shrink-0 bg-[#c3d4e4]" />
      <div className="relative flex flex-col flex-1 min-h-0 border-4 border-b-[3px] border-[#a1a1a1] bg-[#e3e3e3]">
        <TitleBar />
        <TabBar active={activeTab} onChange={setActiveTab} />
        <Ribbon />
        <div className="flex flex-1 min-h-0">
          <ModelTree />
          <Viewport />
        </div>
        <StatusBar />
        <Watermark />
      </div>
    </div>
  );
}
